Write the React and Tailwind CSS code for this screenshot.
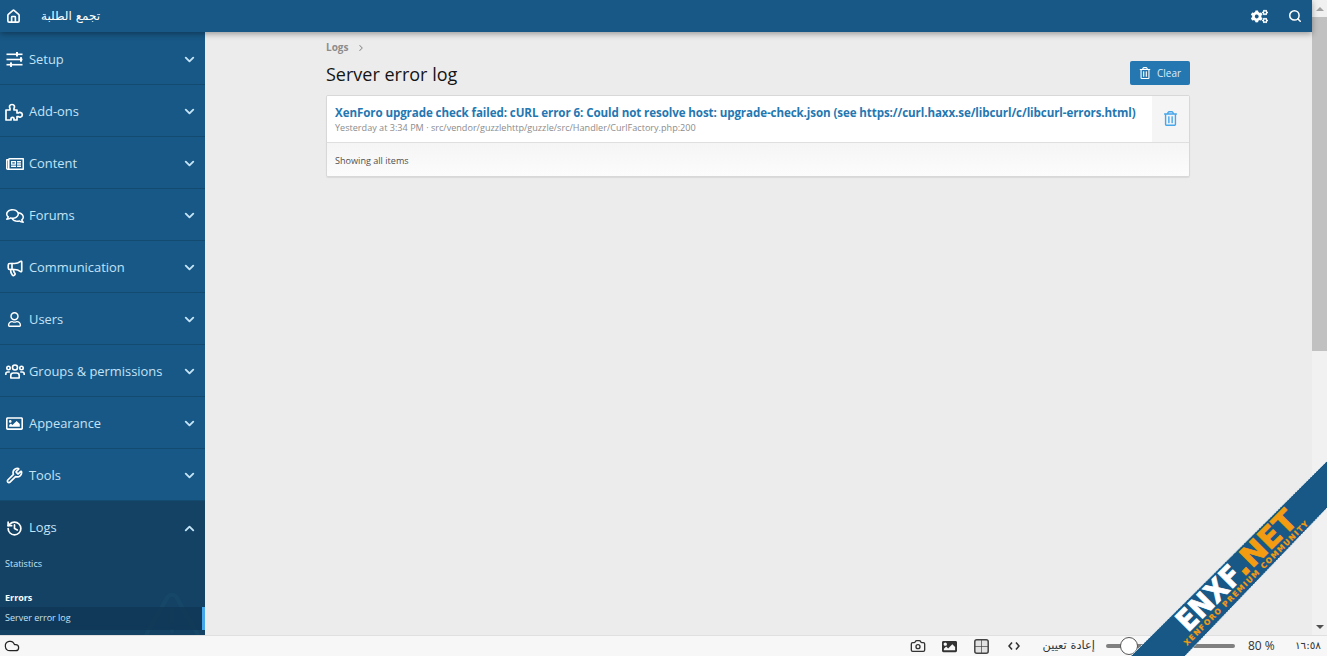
import React from 'react'
import { Home, Megaphone, Wrench, History, ChevronDown, ChevronUp, ChevronRight, Search, Cloud, Camera, TriangleAlert } from 'lucide-react'
import { FaRegComments, FaRegUser, FaRegImage, FaRegTrashAlt, FaCogs, FaImage, FaRegNewspaper } from 'react-icons/fa'

function SlidersIcon() {
  return (
    <svg width="17" height="17" viewBox="0 0 17 17" fill="currentColor">
      <rect x="0.5" y="2.5" width="16" height="1.6" />
      <rect x="0.5" y="7.7" width="16" height="1.6" />
      <rect x="0.5" y="12.9" width="16" height="1.6" />
      <rect x="10" y="1" width="2" height="4.5" />
      <rect x="14" y="6.2" width="2" height="4.5" />
      <rect x="4" y="11.4" width="2" height="4.5" />
    </svg>
  )
}

function PuzzleIcon() {
  return (
    <svg width="19" height="18" viewBox="0 0 19 18" fill="none" stroke="currentColor" strokeWidth="1.7" strokeLinejoin="round">
      <path d="M1 7h4V5.2C4 4 4.4 1.5 7 1.5S10 4 9 5.2V7h3v3h1.4c1-1 3.9-.7 3.9 1.8s-2.900 2.800-3.900 1.800H12V17H9v-1.500c0-1.500-3-1.500-3 0V17H1z" />
    </svg>
  )
}

function UsersIcon() {
  return (
    <svg width="20" height="17" viewBox="0 0 20 17" fill="none" stroke="currentColor" strokeWidth="1.600">
      <circle cx="10" cy="4.500" r="2.500" />
      <circle cx="3.500" cy="5" r="1.700" />
      <circle cx="16.500" cy="5" r="1.700" />
      <path d="M5.800 15v-2.500c0-1.500 1-2.500 2.500-2.500h3.400c1.500 0 2.500 1 2.500 2.500V15z" strokeLinejoin="round" />
      <path d="M0.800 12v-1c0-1.200.8-2 2-2h2" />
      <path d="M19.200 12v-1c0-1.200-.8-2-2-2h-2" />
    </svg>
  )
}

function GridIcon() {
  return (
    <svg width="15" height="15" viewBox="0 0 15 15" fill="#e2e2e2" stroke="#444444">
      <rect x="0.800" y="0.800" width="13.400" height="13.400" rx="2" strokeWidth="1.500" />
      <path d="M7.500 1v13M1 7.500h13" strokeWidth="0.700" fill="none" />
    </svg>
  )
}

function CodeIcon() {
  return (
    <svg width="12" height="10" viewBox="0 0 12 10" fill="none" stroke="#333333" strokeWidth="1.600">
      <path d="M4 1.500 1 5l3 3.500M8 1.500 11 5 8 8.500" />
    </svg>
  )
}

const navItems = [
  { label: 'Setup', icon: <SlidersIcon /> },
  { label: 'Add-ons', icon: <PuzzleIcon /> },
  { label: 'Content', icon: <FaRegNewspaper size={18} /> },
  { label: 'Forums', icon: <FaRegComments size={18} /> },
  { label: 'Communication', icon: <Megaphone size={18} strokeWidth={2.2} /> },
  { label: 'Users', icon: <FaRegUser size={15} /> },
  { label: 'Groups & permissions', icon: <UsersIcon /> },
  { label: 'Appearance', icon: <FaRegImage size={17} /> },
  { label: 'Tools', icon: <Wrench size={17} strokeWidth={2.4} /> },
]

function NavItem({ label, icon }) {
  return (
    <div className="flex items-center h-[52px] shrink-0 pt-[2px] border-b border-[#134a70] text-[#c3e3f7]">
      <span className="w-[29px] flex justify-center pl-[3px] pr-[3px] text-white">{icon}</span>
      <span className="text-[12.9px] flex-1">{label}</span>
      <ChevronDown size={15} strokeWidth={3} className="mr-[8px]" />
    </div>
  )
}

function Ribbon() {
  return (
    <svg className="absolute right-0 bottom-0 pointer-events-none" width="200" height="200" viewBox="0 0 200 200">
      <polygon points="200,5 200,52 58,200 4,200" fill="#185886" />
      <line x1="200" y1="5" x2="4" y2="200" stroke="#dfe9ef" strokeWidth="1" strokeDasharray="2 1" />
      <line x1="200" y1="52" x2="58" y2="200" stroke="#dfe9ef" strokeWidth="1" strokeDasharray="2 1" />
      <g transform="translate(61,177) rotate(-45)" fontFamily="'DejaVu Sans', sans-serif" fontWeight="700">
        <text x="0" y="0" fontSize="29" fill="#ffffff" stroke="#ffffff" strokeWidth="0.800" textLength="79" lengthAdjust="spacingAndGlyphs">ENXF</text>
        <text x="79" y="0" fontSize="29" fill="#f39c12" stroke="#f39c12" strokeWidth="0.800" textLength="78" lengthAdjust="spacingAndGlyphs">.NET</text>
      </g>
      <g transform="translate(60,190) rotate(-45)" fontFamily="'DejaVu Sans', sans-serif" fontWeight="700">
        <text x="0" y="0" fontSize="7.500" fill="#f39c12" stroke="#f39c12" strokeWidth="0.200" textLength="172" lengthAdjust="spacing">XENFORO PREMIUM COMMUNITY</text>
      </g>
    </svg>
  )
}

export default function App() {
  return (
    <div className="relative h-screen w-full overflow-hidden flex flex-col bg-[#ececec] font-['Open_Sans',sans-serif] text-[#141414]">
      <div className="flex flex-1 min-h-0">
        <div className="flex-1 min-w-0 flex flex-col">
          {/* Header */}
          <div className="relative z-10 h-[32px] shrink-0 bg-[#185886] shadow-[0_2px_6px_rgba(0,0,0,0.35)] flex items-center text-white">
            <Home size={15} strokeWidth={2.6} className="ml-[6px]" />
            <span className="ml-[20px] text-[12px] font-['DejaVu_Sans',sans-serif]">تجمع الطلبة</span>
            <div className="flex-1" />
            <FaCogs size={17} className="mr-[20px]" />
            <Search size={14} strokeWidth={2.6} className="mr-[10px]" />
          </div>

          <div className="flex flex-1 min-h-0">
            {/* Sidebar */}
            <div className="w-[205px] shrink-0 bg-[#185886] pt-[1px] flex flex-col overflow-hidden">
              {navItems.map((item) => (
                <NavItem key={item.label} label={item.label} icon={item.icon} />
              ))}
              <div className="relative flex-1 bg-[#134264] text-[#c3e3f7] overflow-hidden">
                <TriangleAlert size={62} strokeWidth={1.6} className="absolute left-[141px] top-[86px] text-[#174768]" />
                <div className="flex items-center h-[52px] pt-[2px]">
                  <span className="w-[29px] flex justify-center pl-[3px] pr-[3px] text-white"><History size={17} strokeWidth={2.4} /></span>
                  <span className="text-[12.9px] flex-1">Logs</span>
                  <ChevronUp size={15} strokeWidth={3} className="mr-[8px]" />
                </div>
                <div className="text-[9px] pl-[5px] h-[22px] flex items-center mb-[12px]">Statistics</div>
                <div className="text-[9px] font-bold pl-[5px] h-[20px] pb-[3px] flex items-end text-white">Errors</div>
                <div className="relative flex items-center h-[23px] pl-[5px] bg-[#0f3552]/70 text-[9px] border-r-[3px] border-[#47a7eb] pb-[2px]">Server error log</div>
              </div>
            </div>

            {/* Main */}
            <div className="flex-1 min-w-0 pl-[121px] pr-[122px] pt-[9px]">
              <div className="flex items-center gap-[8px] text-[10px] font-bold text-[#8c8c8c] h-[13px]">
                Logs
                <ChevronRight size={10} strokeWidth={2.5} />
              </div>
              <div className="flex items-start justify-between mt-[7px] h-[34px]">
                <h1 className="text-[18px] leading-[26px]">Server error log</h1>
                <button className="w-[60px] h-[24px] rounded-[2px] bg-[#2577b1] text-[#dbeefb] text-[10px] flex items-center justify-center gap-[6px]">
                  <FaRegTrashAlt size={12} className="text-white" />
                  Clear
                </button>
              </div>
              <div className="border border-[#d8d8d8] rounded-[2px] overflow-hidden shadow-[0_1px_1px_rgba(0,0,0,0.08)]">
                <div className="flex h-[47px] bg-white border-b border-[#dfdfdf]">
                  <div className="flex-1 min-w-0 px-[8px] pt-[9px]">
                    <div className="text-[11.6px] leading-[16px] font-bold text-[#2577b1] whitespace-nowrap tracking-[-0.1px]">XenForo upgrade check failed: cURL error 6: Could not resolve host: upgrade-check.json (see https://curl.haxx.se/libcurl/c/libcurl-errors.html)</div>
                    <div className="text-[9.1px] leading-[14px] text-[#8c8c8c] whitespace-nowrap">Yesterday at 3:34 PM · src/vendor/guzzlehttp/guzzle/src/Handler/CurlFactory.php:200</div>
                  </div>
                  <div className="w-[37px] bg-[#f5f5f5] flex items-center justify-center pb-[2px] text-[#47a7eb]">
                    <FaRegTrashAlt size={15} />
                  </div>
                </div>
                <div className="h-[33px] pt-[2px] bg-gradient-to-b from-[#f5f5f5] to-[#fcfcfc] flex items-center px-[8px] text-[9.1px] text-[#505050]">Showing all items</div>
              </div>
            </div>
          </div>
        </div>

        {/* Scrollbar */}
        <div className="w-[15px] shrink-0 bg-[#f1f1f1] flex flex-col items-center">
          <div className="h-[17px] flex items-center justify-center">
            <div className="w-0 h-0 border-x-[4px] border-x-transparent border-b-[4px] border-b-[#a3a3a3]" />
          </div>
          <div className="w-full h-[334px] bg-[#c1c1c1]" />
          <div className="flex-1" />
          <div className="h-[17px] flex items-center justify-center">
            <div className="w-0 h-0 border-x-[4px] border-x-transparent border-t-[4px] border-t-[#505050]" />
          </div>
        </div>
      </div>

      {/* Bottom bar */}
      <div className="h-[21px] shrink-0 bg-[#f7f7f7] border-t border-[#e0e0e0] flex items-center text-[#333333]">
        <Cloud size={16} strokeWidth={1.8} className="ml-[4px] text-[#222222]" />
        <div className="flex-1" />
        <Camera size={16} strokeWidth={2} />
        <FaImage size={15} className="ml-[16px]" />
        <div className="ml-[17px]"><GridIcon /></div>
        <div className="ml-[19px]"><CodeIcon /></div>
        <span className="ml-[23px] text-[11.4px] font-['DejaVu_Sans',sans-serif]">إعادة تعيين</span>
        <div className="relative ml-[11px] w-[129px] h-[4px] rounded-full bg-[#808080]">
          <div className="absolute left-[14px] top-[-7px] w-[18px] h-[18px] rounded-full bg-white border border-[#555555]" />
        </div>
        <span className="ml-[13px] w-[40px] text-[12px]">80 %</span>
        <span className="ml-[7px] mr-[6px] text-[10.5px] font-['DejaVu_Sans',sans-serif]">١٦:٥٨</span>
      </div>

      <Ribbon />
    </div>
  )
}
